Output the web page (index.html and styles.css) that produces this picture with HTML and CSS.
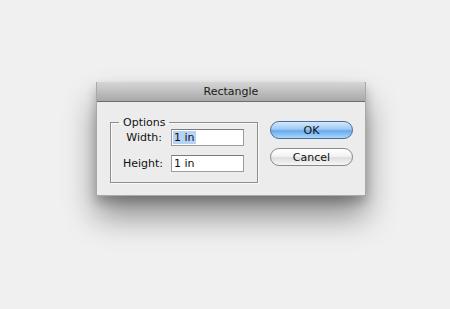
FILE: index.html
```html
<!DOCTYPE html>
<html lang="en">
<head>
    <meta charset="UTF-8">
    <title>Rectangle</title>
    <link rel="stylesheet" href="styles.css">
</head>
<body>
    <div class="dialog">
        <div class="titlebar">Rectangle</div>
        <div class="content">
            <fieldset class="options">
                <legend>Options</legend>
                <div class="row">
                    <label for="w">Width:</label>
                    <div class="field" id="w"><span class="sel">1 in</span></div>
                </div>
                <div class="row">
                    <label for="h">Height:</label>
                    <div class="field" id="h">1 in</div>
                </div>
            </fieldset>
            <div class="buttons">
                <button class="btn ok">OK</button>
                <button class="btn">Cancel</button>
            </div>
        </div>
    </div>
</body>
</html>
```
FILE: styles.css
```css
* {
    margin: 0;
    padding: 0;
    box-sizing: border-box;
}

body {
    background: #f0f0f0;
    font-family: "DejaVu Sans", sans-serif;
    font-size: 11px;
    color: #111;
    padding: 82px 0 0 96px;
    height: 309px;
    overflow: hidden;
}

.dialog {
    width: 270px;
    height: 114px;
    background: #ececec;
    border: 1px solid #a9a9a9;
    border-top: none;
    box-shadow: 0 20px 30px rgba(0, 0, 0, 0.42), 0 6px 10px rgba(0, 0, 0, 0.22);
}

.titlebar {
    height: 20px;
    background: linear-gradient(#d6d6d6, #a8a8a8);
    border-bottom: 1px solid #6e6e6e;
    text-align: center;
    line-height: 19px;
    font-size: 11px;
    color: #1a1a1a;
}

.content {
    display: flex;
    padding: 14px 12px 0 13px;
}

.options {
    width: 148px;
    height: 67px;
    border: 1px solid #8e8e8e;
    box-shadow: inset 1px 1px 0 #fafafa, 1px 1px 0 #fafafa;
    padding: 0 0 0 12px;
}

.options legend {
    padding: 0 4px;
    margin-left: -4px;
    font-size: 11px;
}

.row {
    display: flex;
    align-items: center;
    height: 16px;
    margin-bottom: 10px;
}

.row label {
    width: 39px;
    text-align: right;
    font-size: 11px;
}

.field {
    width: 73px;
    height: 17px;
    margin-left: 9px;
    background: #fff;
    border: 1px solid #9c9c9c;
    border-top-color: #7a7a7a;
    padding: 1px 2px;
    font-size: 11px;
    line-height: 14px;
}

.sel {
    background: #b5d3f7;
    padding: 0 1px;
    margin-left: -1px;
}

.buttons {
    display: flex;
    flex-direction: column;
    gap: 9px;
    margin-left: auto;
    padding-top: 5px;
}

.btn {
    width: 83px;
    height: 18px;
    border-radius: 9px;
    border: 1px solid #8a8a8a;
    background: linear-gradient(#ffffff 0%, #f3f3f3 45%, #dedede 55%, #f6f6f6 100%);
    font-family: "DejaVu Sans", sans-serif;
    font-size: 11px;
    color: #111;
    line-height: 15px;
}

.ok {
    border-color: #4a6f9e;
    background: linear-gradient(#d5e8fb 0%, #9ccaf5 45%, #6aa9ec 55%, #a9d8fb 100%);
}
```
